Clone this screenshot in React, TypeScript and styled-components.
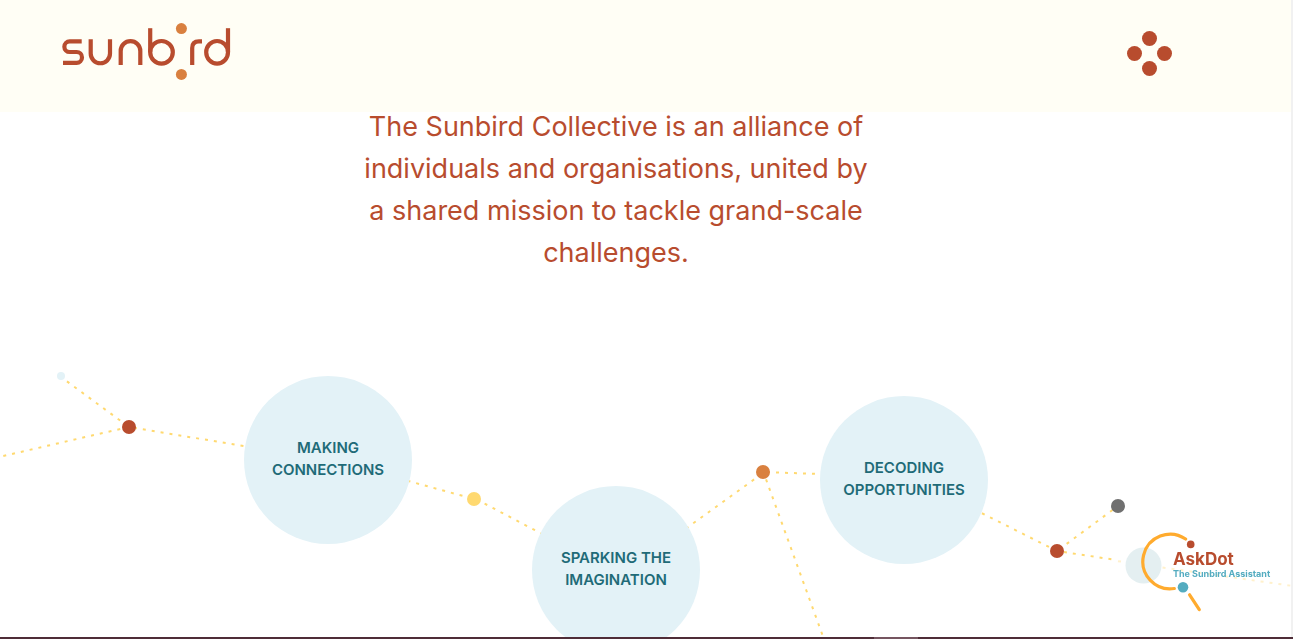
import React from "react";
import styled, { createGlobalStyle } from "styled-components";

const color = {
  rust: "#b84c2e",
  orange: "#d9803f",
  yellow: "#ffd970",
  sky: "#e3f2f7",
  teal: "#1f6b78",
  grey: "#707070",
  cream: "#fffef5",
};

const GlobalStyle = createGlobalStyle`
  *, *::before, *::after { box-sizing: border-box; }
  body {
    margin: 0;
    background: #fff;
    font-family: Inter, Roboto, "Liberation Sans", sans-serif;
  }
`;

const Page = styled.div`
  display: flex;
  flex-direction: column;
  min-height: 100vh;
  border-right: 2px solid #f1f1f1;
`;

const Header = styled.header`
  position: relative;
  z-index: 1;
  display: flex;
  align-items: flex-start;
  justify-content: space-between;
  height: 112px;
  padding: 20px 119px 0 60px;
  background: ${color.cream};
`;

const LogoLink = styled.a`
  display: block;
  line-height: 0;
`;

const MenuButton = styled.button`
  margin-top: 11px;
  padding: 0;
  border: 0;
  background: none;
  line-height: 0;
  cursor: pointer;
`;

const Main = styled.main`
  flex: 1;
  display: flex;
  flex-direction: column;
`;

const Intro = styled.h1`
  margin: -6px 0 0;
  padding-right: 59px;
  color: ${color.rust};
  font-size: 27px;
  font-weight: 400;
  line-height: 42px;
  text-align: center;
`;

const Network = styled.section`
  position: relative;
  flex: 1;
  display: flex;
  justify-content: center;
  min-height: 363px;
  padding-right: 59px;
  overflow: hidden;
`;

const Stage = styled.div`
  position: relative;
  flex: 0 0 1232px;
`;

const Threads = styled.svg`
  position: absolute;
  top: 0;
  left: 0;
  overflow: visible;
`;

const Topic = styled.a<{ $x: number; $y: number }>`
  position: absolute;
  left: ${(p) => p.$x - 84}px;
  top: ${(p) => p.$y - 84}px;
  display: flex;
  align-items: center;
  justify-content: center;
  width: 168px;
  height: 168px;
  padding-bottom: 2px;
  border-radius: 50%;
  background: ${color.sky};
  color: ${color.teal};
  font-size: 15px;
  font-weight: 600;
  line-height: 22px;
  text-align: center;
  text-decoration: none;
  text-transform: uppercase;
`;

const Assistant = styled.button`
  position: fixed;
  right: 16px;
  bottom: 24px;
  display: flex;
  flex-direction: column;
  align-items: flex-start;
  justify-content: flex-start;
  width: 154px;
  height: 84px;
  padding: 18px 0 0 50px;
  border: 0;
  background: none;
  font-family: inherit;
  text-align: left;
  cursor: pointer;
`;

const AssistantMark = styled.svg`
  position: absolute;
  top: 0;
  left: 0;
`;

const AssistantName = styled.span`
  position: relative;
  color: ${color.rust};
  font-size: 17px;
  font-weight: 700;
  line-height: 20px;
`;

const AssistantRole = styled.span`
  position: relative;
  color: #54acc0;
  font-size: 9px;
  font-weight: 700;
  line-height: 10px;
  white-space: nowrap;
`;

const BottomStrip = styled.footer`
  display: flex;
  justify-content: center;
  height: 2px;
  margin-right: -2px;
  padding-left: 499px;
  background: #4f2d38;
`;

const StripHandle = styled.span`
  width: 44px;
  background: #755560;
`;

// Each thread starts at (x1, y1); skip is the gap before its first dash.
const threads = [
  { x1: 129, y1: 153, x2: -10, y2: 185, skip: 0 },
  { x1: 129, y1: 153, x2: 61, y2: 103, skip: 2 },
  { x1: 129, y1: 153, x2: 328, y2: 186, skip: 5 },
  { x1: 474, y1: 225, x2: 328, y2: 185, skip: 3 },
  { x1: 474, y1: 224, x2: 616, y2: 299, skip: 3 },
  { x1: 763, y1: 199, x2: 616, y2: 305, skip: 2 },
  { x1: 763, y1: 198, x2: 904, y2: 203, skip: 4 },
  { x1: 763, y1: 197, x2: 829, y2: 379, skip: 0 },
  { x1: 1057, y1: 277, x2: 904, y2: 200, skip: 0 },
  { x1: 1057, y1: 277, x2: 1118, y2: 232, skip: 3 },
  { x1: 1057, y1: 277, x2: 1116, y2: 286, skip: 7 },
];

const dots = [
  { x: 61, y: 102, r: 4, fill: color.sky },
  { x: 129, y: 153, r: 7, fill: color.rust },
  { x: 474, y: 225, r: 7, fill: color.yellow },
  { x: 763, y: 198, r: 7, fill: color.orange },
  { x: 1057, y: 277, r: 7, fill: color.rust },
  { x: 1118, y: 232, r: 7, fill: color.grey },
];

const topics = [
  { x: 328, y: 186, lines: ["Making", "Connections"] },
  { x: 616, y: 296, lines: ["Sparking the", "Imagination"] },
  { x: 904, y: 206, lines: ["Decoding", "Opportunities"] },
];

function Logo() {
  return (
    <svg width="172" height="62" viewBox="60 20 172 62" fill="none" aria-hidden="true">
      <g stroke={color.rust} strokeWidth="4.2">
        <path d="M81.7 41.3H69.7a5.35 5.35 0 0 0 0 10.7H76.6a5.4 5.4 0 0 1 0 10.8H63" />
        <path d="M90.7 39.3V53.6a9.65 9.65 0 0 0 19.3 0V39.3" />
        <path d="M120.7 65V51a9.8 9.8 0 0 1 19.6 0V65" />
        <path d="M150.2 28.2V52.3" />
        <circle cx="161.5" cy="52.3" r="11.3" />
        <path d="M192.2 65V48q0-6.7 6.7-6.7H202" />
        <path d="M228 28.2V52.3" />
        <ellipse cx="217.1" cy="52.3" rx="10.9" ry="11.3" />
      </g>
      <circle cx="181.4" cy="28.6" r="5.5" fill={color.orange} />
      <circle cx="181.4" cy="74.4" r="5.5" fill={color.orange} />
    </svg>
  );
}

function MenuIcon() {
  return (
    <svg width="45" height="45" viewBox="0 0 45 45" fill={color.rust} aria-hidden="true">
      <circle cx="22.5" cy="7.5" r="7.5" />
      <circle cx="7.5" cy="22.5" r="7.5" />
      <circle cx="37.5" cy="22.5" r="7.5" />
      <circle cx="22.5" cy="37.5" r="7.5" />
    </svg>
  );
}

export default function App() {
  return (
    <>
      <GlobalStyle />
      <Page>
        <Header>
          <LogoLink href="#" aria-label="sunbird">
            <Logo />
          </LogoLink>
          <MenuButton type="button" aria-label="Menu">
            <MenuIcon />
          </MenuButton>
        </Header>
        <Main>
          <Intro>
            The Sunbird Collective is an alliance of
            <br />
            individuals and organisations, united by
            <br />
            a shared mission to tackle grand-scale
            <br />
            challenges.
          </Intro>
          <Network>
            <Stage>
              <Threads width="1232" height="363" aria-hidden="true">
                <g stroke={color.yellow} strokeWidth="2" strokeDasharray="3 6">
                  {threads.map(({ skip, ...ends }, i) => (
                    <line key={i} {...ends} strokeDashoffset={-skip} />
                  ))}
                  <line x1="1117" y1="287" x2="1300" y2="313" strokeDashoffset="-1" opacity="0.35" />
                </g>
                <circle cx="1143.5" cy="291.5" r="18" fill="#e4eff1" />
                {dots.map((d) => (
                  <circle key={d.x} cx={d.x} cy={d.y} r={d.r} fill={d.fill} />
                ))}
              </Threads>
              {topics.map((t) => (
                <Topic key={t.x} href="#" $x={t.x} $y={t.y}>
                  <span>
                    {t.lines[0]}
                    <br />
                    {t.lines[1]}
                  </span>
                </Topic>
              ))}
            </Stage>
          </Network>
        </Main>
        <BottomStrip>
          <StripHandle />
        </BottomStrip>
      </Page>
      <Assistant type="button">
        <AssistantMark width="84" height="84" viewBox="1123 531 84 84" fill="none" aria-hidden="true">
          <g stroke="#ffab2e" strokeWidth="3.2" strokeLinecap="round">
            <path d="M1185.6 539A27.3 27.3 0 1 0 1174.3 588.5" />
            <path d="M1189.6 594.8L1199.3 609.6" />
          </g>
          <circle cx="1190.7" cy="544.4" r="3.8" fill={color.rust} />
          <circle cx="1183" cy="587.3" r="5.3" fill="#54acc0" />
        </AssistantMark>
        <AssistantName>AskDot</AssistantName>
        <AssistantRole>The Sunbird Assistant</AssistantRole>
      </Assistant>
    </>
  );
}
